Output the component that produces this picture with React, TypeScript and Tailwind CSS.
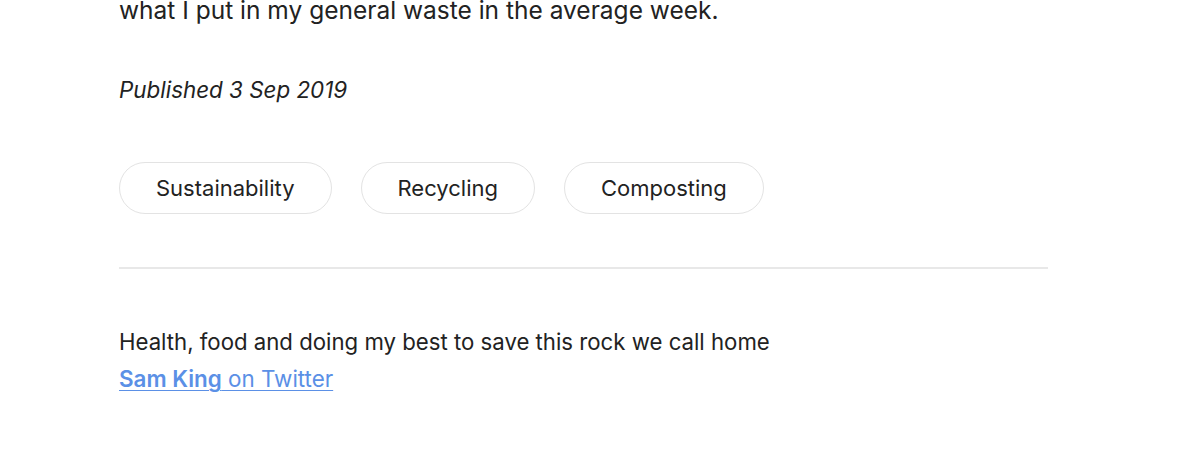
export default function App() {
  const tags = ['Sustainability', 'Recycling', 'Composting'];
  return (
    <div
      className="w-[1200px] h-[472px] overflow-hidden bg-white text-[#222222]"
      style={{ fontFamily: 'Inter, "Noto Sans", sans-serif' }}
    >
      <div className="ml-[119px] w-[929px] -mt-[10px]">
        <p className="text-[24.5px] leading-[40px]">what I put in my general waste in the average week.</p>
        <p className="mt-[44px] text-[22.4px] italic leading-[32px]">Published 3 Sep 2019</p>
        <div className="mt-[56px] flex gap-[29px]">
          {tags.map((t) => (
            <span
              key={t}
              className="h-[52px] px-[36px] flex items-center rounded-full border border-[#e3e3e3] text-[22px]"
            >
              {t}
            </span>
          ))}
        </div>
        <hr className="mt-[53px] border-0 h-[2px] bg-[#e8e8e8]" />
        <p className="mt-[54px] text-[22.2px] leading-[37px]">Health, food and doing my best to save this rock we call home</p>
        <a href="#" className="text-[22.4px] leading-[37px] text-[#5b90e6] underline decoration-1 underline-offset-[3px]">
          <span className="font-semibold">Sam King</span> on Twitter
        </a>
      </div>
    </div>
  );
}
